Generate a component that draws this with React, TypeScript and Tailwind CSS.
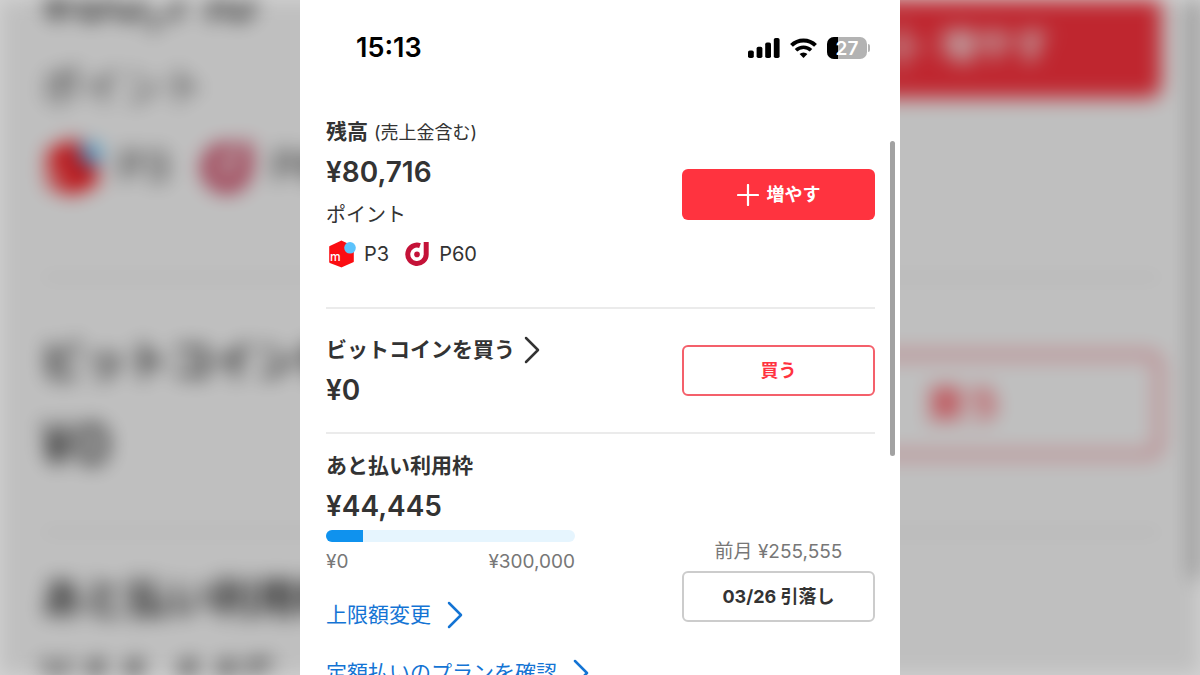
import type { ReactNode } from "react";

type ChevronLinkProps = {
    href: string;
    children: ReactNode;
    className: string;
};

function Chevron() {
    return (
        <svg width="16" height="28" viewBox="0 0 16 28" fill="none" aria-hidden="true">
            <path
                d="M2 2 L14 14 L2 26"
                stroke="currentColor"
                strokeWidth="2.5"
                strokeLinecap="round"
                strokeLinejoin="round"
            />
        </svg>
    );
}

function ChevronLink({ href, children, className }: ChevronLinkProps) {
    return (
        <a href={href} className={`flex h-8 items-center whitespace-nowrap text-[21px] ${className}`}>
            {children}
            <Chevron />
        </a>
    );
}

function SignalIcon() {
    return (
        <svg width="32" height="20" viewBox="0 0 32 20" aria-hidden="true">
            <rect x="0" y="12.5" width="5.8" height="7.5" rx="1.8" />
            <rect x="8.6" y="8.8" width="5.8" height="11.2" rx="1.8" />
            <rect x="17.2" y="4.4" width="5.8" height="15.6" rx="1.8" />
            <rect x="25.8" y="0" width="5.8" height="20" rx="1.8" />
        </svg>
    );
}

function WifiIcon() {
    return (
        <svg width="27" height="20" viewBox="0 0 27 20" fill="none" aria-hidden="true">
            <path d="M1.5 7.4 A17 17 0 0 1 25.5 7.4" stroke="#000" strokeWidth="4" />
            <path d="M6 12.3 A10.8 10.8 0 0 1 21 12.3" stroke="#000" strokeWidth="3.6" />
            <path d="M9.6 16 A5.8 5.8 0 0 1 17.4 16 L13.5 20 Z" fill="#000" />
        </svg>
    );
}

function Battery({ level }: { level: number }) {
    return (
        <div className="flex items-center gap-px">
            <div className="relative flex h-[22px] w-10 items-center justify-center overflow-hidden rounded-[7px] bg-[#b3b3b3]">
                <div className="absolute inset-y-0 left-0 bg-black" style={{ width: `${level}%` }} />
                <span className="relative text-[19px] leading-none font-semibold text-white">{level}</span>
            </div>
            <div className="h-2 w-[2px] rounded-r-full bg-[#b3b3b3]" />
        </div>
    );
}

function MercariIcon() {
    return (
        <svg width="28" height="28" viewBox="0 0 28 28" aria-hidden="true">
            <path
                d="M13.4 1.6 L24.8 7 V21.4 L13.4 26.4 L2.2 22 V7 Z"
                fill="#fb0d12"
                stroke="#fb0d12"
                strokeWidth="2"
                strokeLinejoin="round"
            />
            <text x="2" y="21" fontSize="12" fontWeight="500" fill="#fff">
                m
            </text>
            <circle cx="22" cy="7.8" r="5.8" fill="#5cc3fc" />
        </svg>
    );
}

function DPointIcon() {
    return (
        <svg width="24" height="26" viewBox="0 0 24 26" fill="none" aria-hidden="true">
            <path
                d="M15 4.6 A9.2 9.2 0 1 0 21.2 13.4 V1"
                stroke="#c41238"
                strokeWidth="5"
            />
            <circle cx="12" cy="13.4" r="2.8" fill="#c41238" />
        </svg>
    );
}

function LimitBar({ used, limit }: { used: number; limit: number }) {
    return (
        <div
            role="progressbar"
            aria-label="あと払い利用枠"
            aria-valuemin={0}
            aria-valuemax={limit}
            aria-valuenow={used}
            className="h-3 overflow-hidden rounded-full bg-[#e6f5fe]"
        >
            <div className="h-full bg-[#0f92ee]" style={{ width: `${(used / limit) * 100}%` }} />
        </div>
    );
}

function Screen() {
    return (
        <div className="relative h-full overflow-hidden bg-white font-['Inter','Noto_Sans_CJK_JP',sans-serif] text-[#333]">
            <header className="flex h-24 items-center justify-between pr-[30px] pl-14 text-black">
                <span className="text-[27px] font-semibold">15:13</span>
                <div className="flex items-center gap-[10px]">
                    <SignalIcon />
                    <WifiIcon />
                    <Battery level={27} />
                </div>
            </header>

            <main className="pr-[25px] pl-[26px]">
                <section className="flex items-center justify-between border-b-2 border-[#ebebeb] pt-5 pb-[34px]">
                    <div>
                        <h2 className="flex h-8 items-center gap-[6px] text-[21px] font-bold">
                            残高
                            <span className="text-[18px] font-normal">(売上金含む)</span>
                        </h2>
                        <p className="text-[28px] leading-[48px] font-semibold">¥80,716</p>
                        <p className="text-[20px] leading-[39px]">ポイント</p>
                        <div className="flex h-[38px] items-center gap-4 pl-[2px] text-[20px]">
                            <span className="flex items-center gap-2">
                                <MercariIcon />
                                P3
                            </span>
                            <span className="flex items-center gap-[10px]">
                                <DPointIcon />
                                P60
                            </span>
                        </div>
                    </div>
                    <button
                        type="button"
                        className="flex h-[51px] w-[193px] items-center justify-center gap-2 rounded-md bg-[#ff333f] text-[18px] font-bold text-white"
                    >
                        <svg width="22" height="22" viewBox="0 0 22 22" fill="none" aria-hidden="true">
                            <path d="M11 1 V21 M1 11 H21" stroke="#fff" strokeWidth="2.2" strokeLinecap="round" />
                        </svg>
                        増やす
                    </button>
                </section>

                <section className="flex items-center justify-between border-b-2 border-[#ebebeb]">
                    <div className="pt-[25px] pb-[18px]">
                        <h2>
                            <ChevronLink href="#bitcoin" className="gap-[9px] font-bold">
                                ビットコインを買う
                            </ChevronLink>
                        </h2>
                        <p className="text-[28px] leading-[48px] font-semibold">¥0</p>
                    </div>
                    <button
                        type="button"
                        className="h-[51px] w-[193px] rounded-md border-2 border-[#f4606b] text-[18px] font-bold text-[#ff333f]"
                    >
                        買う
                    </button>
                </section>

                <section className="flex items-start justify-between pt-4">
                    <div className="w-[249px]">
                        <h2 className="flex h-8 items-center text-[21px] font-bold">あと払い利用枠</h2>
                        <p className="text-[28px] leading-[48px] font-semibold">¥44,445</p>
                        <LimitBar used={44445} limit={300000} />
                        <div className="flex justify-between text-[19px] leading-[39px] text-[#777]">
                            <span>¥0</span>
                            <span>¥300,000</span>
                        </div>
                        <div className="mt-[18px] flex flex-col items-start gap-[26px] text-[#1474d4]">
                            <ChevronLink href="#limit" className="gap-4">
                                上限額変更
                            </ChevronLink>
                            <ChevronLink href="#plan" className="gap-4">
                                定額払いのプランを確認
                            </ChevronLink>
                        </div>
                    </div>
                    <div className="pt-[82px] text-center">
                        <p className="text-[19px] leading-[39px] text-[#777]">前月 ¥255,555</p>
                        <button
                            type="button"
                            className="h-[51px] w-[193px] rounded-md border-2 border-[#cccccc] text-[18px] font-bold"
                        >
                            03/26 引落し
                        </button>
                    </div>
                </section>
            </main>

            <div className="absolute top-[141px] right-[5px] h-[315px] w-[5px] rounded-full bg-[#a2a2a2]" />
        </div>
    );
}

export default function App() {
    return (
        <div className="relative flex h-screen justify-center overflow-hidden bg-[#d4d4d4]">
            {/* enlarged, blurred and dimmed copy behind the screen */}
            <div className="absolute inset-0 overflow-hidden blur-[10px] brightness-75" aria-hidden="true" inert>
                <div className="mx-auto h-full w-1/2 scale-204">
                    <Screen />
                </div>
            </div>
            <div className="relative h-full w-1/2">
                <Screen />
            </div>
        </div>
    );
}
